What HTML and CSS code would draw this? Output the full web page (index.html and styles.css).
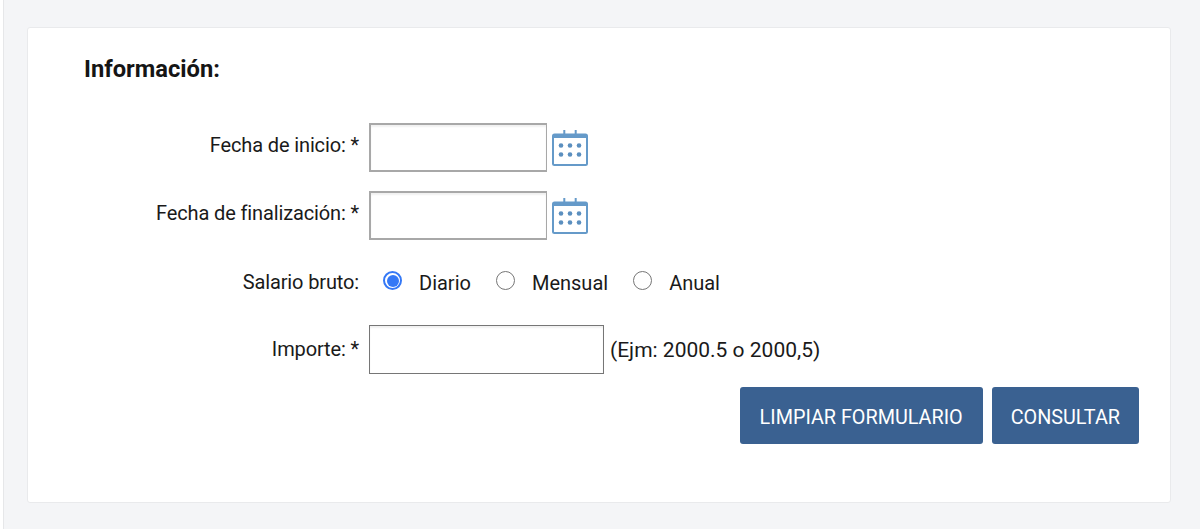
FILE: index.html
```html
<!DOCTYPE html>
<html lang="es">

<head>
    <meta charset="UTF-8">
    <meta name="viewport" content="width=device-width, initial-scale=1.0">
    <title>Información</title>
    <link rel="stylesheet" href="styles.css">
</head>

<body>
    <div class="page">
        <form class="card">
            <h2 class="title">Información:</h2>

            <div class="row row-date">
                <label class="label">Fecha de inicio: *</label>
                <input class="field field-date" type="text">
                <svg class="cal" viewBox="0 0 36 36" width="36" height="36">
                    <rect x="1" y="4.5" width="34" height="30.5" rx="1.5" fill="#fff" stroke="#659ac9" stroke-width="2" />
                    <path d="M1 6.5h34" stroke="#659ac9" stroke-width="3" />
                    <path d="M12.3 0v8M23.7 0v8" stroke="#659ac9" stroke-width="2" />
                    <g fill="#5b8fbf">
                        <circle cx="9" cy="15.5" r="2.3" />
                        <circle cx="18" cy="15.5" r="2.3" />
                        <circle cx="27" cy="15.5" r="2.3" />
                        <circle cx="9" cy="24.5" r="2.3" />
                        <circle cx="18" cy="24.5" r="2.3" />
                        <circle cx="27" cy="24.5" r="2.3" />
                    </g>
                </svg>
            </div>

            <div class="row row-date">
                <label class="label">Fecha de finalización: *</label>
                <input class="field field-date" type="text">
                <svg class="cal" viewBox="0 0 36 36" width="36" height="36">
                    <rect x="1" y="4.5" width="34" height="30.5" rx="1.5" fill="#fff" stroke="#659ac9" stroke-width="2" />
                    <path d="M1 6.5h34" stroke="#659ac9" stroke-width="3" />
                    <path d="M12.3 0v8M23.7 0v8" stroke="#659ac9" stroke-width="2" />
                    <g fill="#5b8fbf">
                        <circle cx="9" cy="15.5" r="2.3" />
                        <circle cx="18" cy="15.5" r="2.3" />
                        <circle cx="27" cy="15.5" r="2.3" />
                        <circle cx="9" cy="24.5" r="2.3" />
                        <circle cx="18" cy="24.5" r="2.3" />
                        <circle cx="27" cy="24.5" r="2.3" />
                    </g>
                </svg>
            </div>

            <div class="row row-radio">
                <label class="label">Salario bruto:</label>
                <div class="options">
                    <label class="option"><span class="radio radio-on"></span>Diario</label>
                    <label class="option"><span class="radio"></span>Mensual</label>
                    <label class="option"><span class="radio"></span>Anual</label>
                </div>
            </div>

            <div class="row row-amount">
                <label class="label">Importe: *</label>
                <input class="field field-amount" type="text">
                <span class="hint">(Ejm: 2000.5 o 2000,5)</span>
            </div>

            <div class="actions">
                <button class="btn" type="button">LIMPIAR FORMULARIO</button>
                <button class="btn btn-send" type="button">CONSULTAR</button>
            </div>
        </form>
    </div>
</body>

</html>
```

FILE: styles.css
```css
* {
    box-sizing: border-box;
}

body {
    margin: 0;
    background: #fff;
    font-family: Roboto, "Liberation Sans", sans-serif;
    color: #1a1a1a;
}

.page {
    height: 529px;
    margin-left: 3px;
    padding: 27px 29px 0 23px;
    background: #f4f5f7;
    border-left: 1px solid #e6e7e9;
    overflow: hidden;
}

.card {
    height: 476px;
    padding: 27px 31px 0 0;
    background: #fff;
    border: 1px solid #e9eaec;
    border-radius: 3px;
}

.title {
    margin: 0 0 40px 56px;
    height: 28px;
    font-size: 23.7px;
    line-height: 28px;
    font-weight: 700;
    color: #151515;
}

.row {
    display: flex;
    align-items: center;
}

.row-date {
    height: 49px;
    margin-bottom: 19px;
}

.row-date .label {
    margin-bottom: 5px;
}

.row-radio {
    height: 24px;
    margin-top: 30px;
    margin-bottom: 31px;
}

.row-amount {
    height: 49px;
    margin-bottom: 13px;
}

.row-amount .label {
    margin-bottom: 2px;
}

.label {
    width: 331px;
    flex: none;
    text-align: right;
    font-size: 20px;
    letter-spacing: -0.13px;
}

.field {
    height: 49px;
    margin-left: 10px;
    background: #fff;
    border: 2px solid #a8a8a8;
    border-right-width: 1px;
    box-shadow: inset 0 2px 2px #f1f1f1;
}

.field-date {
    width: 178px;
}

.field-amount {
    width: 235px;
    border: 1px solid #767676;
}

.cal {
    margin-left: 5px;
}

.options {
    display: flex;
    margin-left: 24px;
    padding-top: 2px;
}

.option {
    display: flex;
    align-items: center;
    margin-right: 25px;
    font-size: 20px;
}

.radio {
    width: 19px;
    height: 19px;
    margin-right: 17px;
    margin-top: -5px;
    border: 1px solid #767676;
    border-radius: 50%;
    background: #fff;
}

.radio-on {
    border: 2px solid #3478f6;
    background: #3478f6;
    background-clip: content-box;
    padding: 1.5px;
}

.hint {
    margin-left: 6px;
    font-size: 21px;
}

.actions {
    display: flex;
    justify-content: flex-end;
    gap: 9px;
}

.btn {
    height: 57px;
    padding: 3px 20px 0;
    background: #3a6191;
    color: #fff;
    border: 0;
    border-radius: 3px;
    font-family: Roboto, "Liberation Sans", sans-serif;
    font-size: 19.8px;
    font-weight: 400;
}

.btn-send {
    padding: 3px 19px 0;
}
```
